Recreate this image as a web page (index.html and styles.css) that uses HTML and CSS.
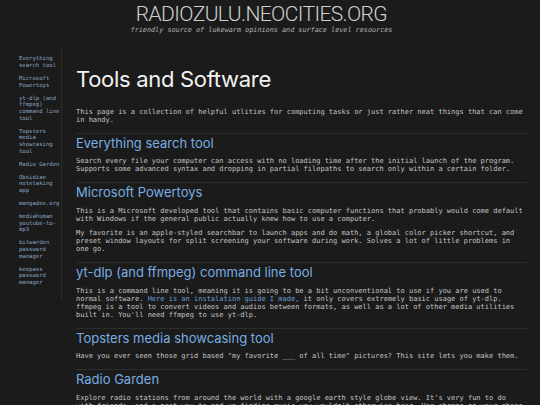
FILE: index.html
```html
<!DOCTYPE html>
<html lang="en">
<head>
<meta charset="utf-8">
<title>Tools and Software - radiozulu</title>
<link rel="stylesheet" href="styles.css">
</head>
<body>
<header class="site-header">
  <h1 class="site-title">RADIOZULU.NEOCITIES.ORG</h1>
  <p class="tagline">friendly source of lukewarm opinions and surface level resources</p>
</header>
<div class="layout">
  <nav class="sidebar">
    <a href="#everything">Everything search tool</a>
    <a href="#powertoys">Microsoft Powertoys</a>
    <a href="#ytdlp">yt-dlp (and ffmpeg) command line tool</a>
    <a href="#topsters">Topsters media showcasing tool</a>
    <a href="#radio">Radio Garden</a>
    <a href="#obsidian">Obsidian notetaking app</a>
    <a href="#mangadex">mangadex.org</a>
    <a href="#mediahuman">mediahuman youtube-to-mp3</a>
    <a href="#bitwarden">bitwarden password manager</a>
    <a href="#keepass">keepass password manager</a>
  </nav>
  <main class="content">
    <h1 class="page-title">Tools and Software</h1>
    <p>This page is a collection of helpful utlities for computing tasks or just rather neat things that can come in handy.</p>

    <section class="section" id="everything">
      <h2 class="section-title">Everything search tool</h2>
      <p>Search every file your computer can access with no loading time after the initial launch of the program. Supports some advanced syntax and dropping in partial filepaths to search only within a certain folder.</p>
    </section>

    <section class="section" id="powertoys">
      <h2 class="section-title">Microsoft Powertoys</h2>
      <p>This is a Microsoft developed tool that contains basic computer functions that probably would come default with Windows if the general public actually knew how to use a computer.</p>
      <p>My favorite is an apple-styled searchbar to launch apps and do math, a global color picker shortcut, and preset window layouts for split screening your software during work. Solves a lot of little problems in one go.</p>
    </section>

    <section class="section" id="ytdlp">
      <h2 class="section-title">yt-dlp (and ffmpeg) command line tool</h2>
      <p>This is a command line tool, meaning it is going to be a bit unconventional to use if you are used to normal software. <a class="inline-link" href="#guide">Here is an instalation guide I made,</a> it only covers extremely basic usage of yt-dlp. ffmpeg is a tool to convert videos and audios between formats, as well as a lot of other media utilities built in. You'll need ffmpeg to use yt-dlp.</p>
    </section>

    <section class="section" id="topsters">
      <h2 class="section-title">Topsters media showcasing tool</h2>
      <p>Have you ever seen those grid based "my favorite ___ of all time" pictures? This site lets you make them.</p>
    </section>

    <section class="section" id="radio">
      <h2 class="section-title">Radio Garden</h2>
      <p>Explore radio stations from around the world with a google earth style globe view. It's very fun to do with friends, and a neat way to end up finding music you wouldn't otherwise hear. Use chrome on your phone for the best experience.</p>
    </section>
  </main>
</div>
</body>
</html>
```

FILE: styles.css
```css
html, body {
  margin: 0;
  padding: 0;
  background: #1b1b1b;
  color: #c4c4c4;
}

.site-header {
  text-align: center;
  padding: 1.5px 17px 0 0;
}

.site-title {
  margin: 0;
  font-family: Roboto, "Liberation Sans", sans-serif;
  font-weight: 300;
  font-size: 21px;
  line-height: 24px;
  letter-spacing: -0.6px;
  color: #d0d0d0;
}

.tagline {
  margin: 0;
  font-family: "DejaVu Sans Mono", "Liberation Mono", monospace;
  font-style: italic;
  font-size: 6.8px;
  line-height: 8px;
  color: #b4b4b4;
}

.layout {
  display: flex;
  margin-top: 12px;
  padding: 0 13px 0 19px;
}

.sidebar {
  flex: none;
  width: 42px;
  align-self: flex-start;
  border-right: 1px solid #2c2c2c;
  padding-top: 9.7px;
  padding-bottom: 8px;
}

.sidebar a {
  display: block;
  margin-bottom: 6.33px;
  font-family: "DejaVu Sans Mono", "Liberation Mono", monospace;
  font-size: 5.6px;
  line-height: 6.67px;
  color: #88a7c3;
  text-decoration: none;
}

.content {
  flex: 1;
  min-width: 0;
  padding-left: 14px;
}

.page-title {
  margin: 20.7px 0 15.5px;
  font-family: Inter, "Liberation Sans", sans-serif;
  font-weight: 400;
  font-size: 22px;
  line-height: 26px;
  letter-spacing: -0.3px;
  color: #f2f2f2;
}

.content p {
  margin: 0 0 6.6px;
  max-width: 106.5ch;
  font-family: "DejaVu Sans Mono", "Liberation Mono", monospace;
  font-size: 7px;
  line-height: 8px;
  color: #c4c4c4;
}

.section {
  margin-top: 9px;
  border-top: 1px solid #2c2c2c;
  padding-top: 1px;
}

.section-title {
  margin: 0 0 6.5px;
  font-family: Inter, "Liberation Sans", sans-serif;
  font-weight: 400;
  font-size: 13px;
  line-height: 16px;
  color: #78aee2;
}

.inline-link {
  color: #6b9fd4;
  text-decoration: none;
}
```
